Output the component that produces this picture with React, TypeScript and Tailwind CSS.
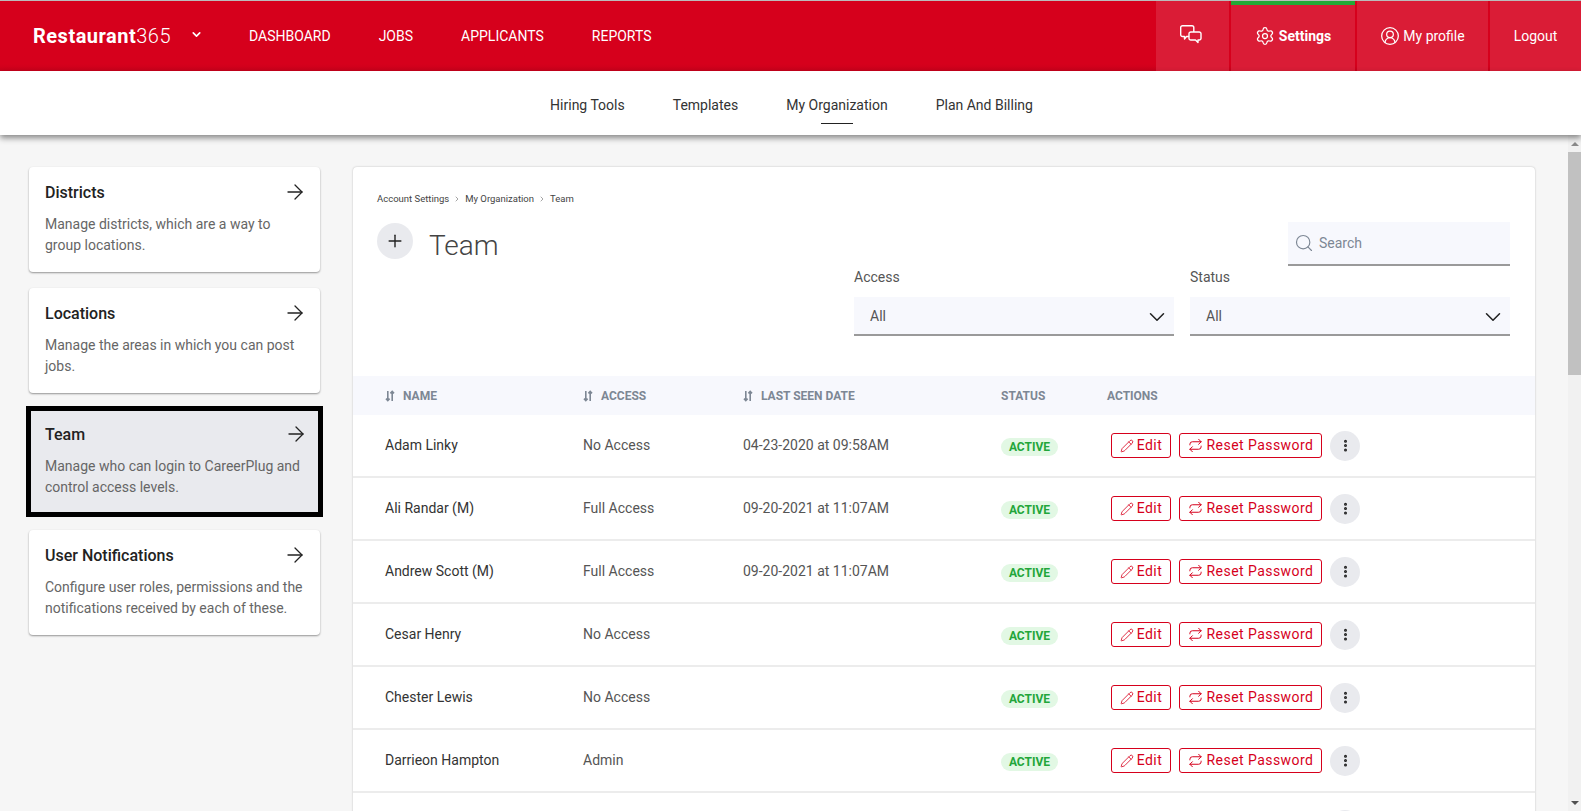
import { ArrowRight, ChevronDown, ChevronRight, EllipsisVertical, Pencil, Plus, Repeat, Search, Settings, CircleUserRound } from "lucide-react";

const nav = ["DASHBOARD", "JOBS", "APPLICANTS", "REPORTS"];
const tabs = ["Hiring Tools", "Templates", "My Organization", "Plan And Billing"];

const cards = [
    { title: "Districts", text: "Manage districts, which are a way to group locations." },
    { title: "Locations", text: "Manage the areas in which you can post jobs." },
    { title: "Team", text: "Manage who can login to CareerPlug and control access levels.", active: true },
    { title: "User Notifications", text: "Configure user roles, permissions and the notifications received by each of these." },
];

const people = [
    { name: "Adam Linky", access: "No Access", seen: "04-23-2020 at 09:58AM" },
    { name: "Ali Randar (M)", access: "Full Access", seen: "09-20-2021 at 11:07AM" },
    { name: "Andrew Scott (M)", access: "Full Access", seen: "09-20-2021 at 11:07AM" },
    { name: "Cesar Henry", access: "No Access", seen: "" },
    { name: "Chester Lewis", access: "No Access", seen: "" },
    { name: "Darrieon Hampton", access: "Admin", seen: "" },
];

function SortIcon() {
    return (
        <svg width="10" height="12" viewBox="0 0 10 12" fill="none" stroke="#7d8794" strokeWidth="1.6">
            <path d="M2.8 1v9.5M1 8.6l1.8 2 1.8-2" />
            <path d="M7.2 11V1.5M5.4 3.4l1.8-2 1.8 2" />
        </svg>
    );
}

function ChatIcon() {
    return (
        <svg className="mb-[4px] mr-[3px]" width="22" height="19" viewBox="0 0 22 19" fill="none" stroke="currentColor" strokeWidth="1.4" strokeLinejoin="round">
            <path d="M9 11.5H6.5L4.5 14v-2.5H2.5a1.8 1.8 0 0 1-1.8-1.8V2.5A1.8 1.8 0 0 1 2.5.7H12a1.8 1.8 0 0 1 1.8 1.8V7" />
            <path d="M10.8 7h8.4A1.8 1.8 0 0 1 21 8.8v4.4a1.8 1.8 0 0 1-1.8 1.8H18v2.6L15.5 15h-4.7A1.8 1.8 0 0 1 9 13.2V8.8A1.8 1.8 0 0 1 10.8 7z" />
        </svg>
    );
}

function Row({ name, access, seen }: { name: string; access: string; seen: string }) {
    return (
        <div className="flex h-[63px] flex-shrink-0 items-center border-b-2 border-[#ececec] text-[14px]">
            <div className="w-[230px] pl-[32px] text-[#333]">{name}</div>
            <div className="w-[160px] text-[#555]">{access}</div>
            <div className="w-[258px] text-[#555]">{seen}</div>
            <div className="w-[110px]">
                <span className="mt-[4px] inline-flex h-[18px] w-[57px] items-center justify-center rounded-full bg-[#e2f8e4] text-[12px] font-bold text-[#22a63a]">
                    ACTIVE
                </span>
            </div>
            <div className="flex items-center">
                <button className="flex h-[25px] w-[60px] items-center justify-center gap-[3px] rounded-[3px] border border-[#d6001c] text-[14px] tracking-[0.4px] text-[#d6001c]">
                    <Pencil className="h-[14px] w-[14px]" strokeWidth={1.4} />
                    Edit
                </button>
                <button className="ml-[8px] flex h-[25px] w-[143px] items-center justify-center gap-[4px] rounded-[3px] border border-[#d6001c] text-[14px] tracking-[0.45px] text-[#d6001c]">
                    <Repeat className="h-[15px] w-[15px]" strokeWidth={1.6} />
                    Reset Password
                </button>
                <button className="ml-[8px] flex h-[30px] w-[30px] items-center justify-center rounded-full bg-[#e9eaee] text-[#222]">
                    <EllipsisVertical className="h-[15px] w-[15px]" strokeWidth={2.8} />
                </button>
            </div>
        </div>
    );
}

function FilterSelect({ label }: { label: string }) {
    return (
        <div className="w-[320px]">
            <div className="h-[20px] text-[14px] leading-[20px] text-[#555]">{label}</div>
            <div className="mt-[10px] flex h-[39px] items-center justify-between border-b-2 border-[#9a9a9a] bg-[#f7f8fd] pl-[16px] pr-[4px] pt-[2px] text-[14px] text-[#555]">
                All
                <ChevronDown className="h-[26px] w-[26px] text-[#222]" strokeWidth={1.4} />
            </div>
        </div>
    );
}

function CardBody({ title, text }: { title: string; text: string }) {
    return (
        <>
            <div className="flex items-center justify-between">
                <span className="text-[16px] font-medium leading-[24px] text-[#222]">{title}</span>
                <ArrowRight className="mt-[-3px] h-[24px] w-[24px] text-[#222]" strokeWidth={1.3} />
            </div>
            <p className="mt-[9px] text-[14px] leading-[21px] text-[#666]">{text}</p>
        </>
    );
}

export default function App() {
    return (
        <div className="flex h-screen flex-col overflow-hidden bg-[#f6f6f6] font-['Roboto',sans-serif]">
            {/* Header */}
            <div className="h-[1px] flex-shrink-0 bg-[#bbb]" />
            <header className="flex h-[70px] flex-shrink-0 items-stretch justify-between bg-gradient-to-b from-[#d6001c] from-90% to-[#c9001b] text-white">
                <div className="flex items-center">
                    <div className="ml-[33px] flex w-[137px] items-baseline text-[20px] tracking-[0.5px]">
                        <span className="font-bold">Restaurant</span>
                        <span className="font-light">365</span>
                    </div>
                    <ChevronDown className="mb-[3px] ml-[20px] h-[13px] w-[13px]" strokeWidth={3} />
                    <nav className="ml-[46px] flex gap-[48px] text-[14px]">
                        {nav.map((item) => (
                            <span key={item}>{item}</span>
                        ))}
                    </nav>
                </div>
                <div className="flex items-stretch gap-[2px] text-[14px]">
                    <div className="flex w-[73px] items-center justify-center bg-[#da1c36]">
                        <ChatIcon />
                    </div>
                    <div className="flex w-[124px] items-center justify-center gap-[4px] border-t-4 border-[#23a936] bg-[#da1c36] pb-[4px] font-bold">
                        <Settings className="h-[20px] w-[20px]" strokeWidth={1.5} />
                        Settings
                    </div>
                    <div className="flex w-[131px] items-center justify-center gap-[3px] bg-[#da1c36]">
                        <CircleUserRound className="h-[20px] w-[20px]" strokeWidth={1.5} />
                        My profile
                    </div>
                    <div className="flex w-[91px] items-center justify-center bg-[#da1c36]">Logout</div>
                </div>
            </header>

            {/* Sub navigation */}
            <div className="relative z-10 flex h-[64px] flex-shrink-0 justify-center gap-[48px] bg-white pl-[2px] text-[14px] text-[#333] shadow-[0_3px_6px_rgba(0,0,0,0.45)]">
                {tabs.map((tab) => (
                    <div key={tab} className="relative flex items-center pt-[4px]">
                        {tab}
                        {tab === "My Organization" && (
                            <div className="absolute bottom-[11px] left-[35px] h-[1px] w-[32px] bg-[#222]" />
                        )}
                    </div>
                ))}
            </div>

            <div className="flex min-h-0 flex-1">
                <div className="flex min-w-0 flex-1 items-start overflow-hidden pl-[26px] pt-[32px]">
                    {/* Left cards */}
                    <div className="flex w-[297px] flex-shrink-0 flex-col">
                        {cards.map((card) =>
                            card.active ? (
                                <div key={card.title} className="mb-[13px] mt-[-3px] h-[111px] border-[5px] border-black bg-[#e9eaee] pl-[14px] pr-[10px] pt-[12px]">
                                    <CardBody title={card.title} text={card.text} />
                                </div>
                            ) : (
                                <div key={card.title} className="mx-[3px] mb-[16px] h-[105px] rounded-[4px] bg-white pl-[16px] pr-[13px] pt-[14px] shadow-[0_1px_2px_rgba(0,0,0,0.4)]">
                                    <CardBody title={card.title} text={card.text} />
                                </div>
                            ),
                        )}
                    </div>

                    {/* Team panel */}
                    <main className="ml-[30px] w-[1182px] flex-shrink-0 rounded-t-[4px] bg-white shadow-[0_0_2px_rgba(0,0,0,0.25)]">
                        <div className="relative h-[209px] px-[24px]">
                            <div className="flex items-center gap-[4px] pt-[26px] text-[9.5px] leading-[12px] text-[#444]">
                                Account Settings
                                <ChevronRight className="h-[8px] w-[8px] text-[#777]" />
                                My Organization
                                <ChevronRight className="h-[8px] w-[8px] text-[#777]" />
                                Team
                            </div>
                            <div className="mt-[18px] flex items-start">
                                <div className="flex h-[36px] w-[36px] items-center justify-center rounded-full bg-[#e9eaee] text-[#222]">
                                    <Plus className="h-[20px] w-[20px]" strokeWidth={1.7} />
                                </div>
                                <h1 className="ml-[16px] mt-[1px] text-[28px] font-light leading-[44px] text-[#444]">Team</h1>
                            </div>
                            <div className="absolute right-[25px] top-[55px] flex h-[44px] w-[222px] items-center gap-[5px] border-b-2 border-[#9a9a9a] bg-[#f7f8fd] pl-[6px] text-[14px] text-[#7d8794]">
                                <Search className="h-[20px] w-[20px]" strokeWidth={1.4} />
                                Search
                            </div>
                            <div className="absolute right-[25px] top-[100px] flex gap-[16px]">
                                <FilterSelect label="Access" />
                                <FilterSelect label="Status" />
                            </div>
                        </div>
                        <div className="flex h-[39px] items-center bg-[#f7f8fd] text-[12px] font-bold text-[#7d8794]">
                            <div className="flex w-[230px] items-center gap-[8px] pl-[32px]"><SortIcon />NAME</div>
                            <div className="flex w-[160px] items-center gap-[8px]"><SortIcon />ACCESS</div>
                            <div className="flex w-[258px] items-center gap-[8px]"><SortIcon />LAST SEEN DATE</div>
                            <div className="w-[106px]">STATUS</div>
                            <div>ACTIONS</div>
                        </div>
                        {people.map((person) => (
                            <Row key={person.name} {...person} />
                        ))}
                        {/* next row is only just in view: the top of its menu button */}
                        <div className="flex h-[63px] items-center pl-[977px]">
                            <div className="h-[30px] w-[30px] rounded-full bg-[#e9eaee]" />
                        </div>
                    </main>
                </div>

                {/* Scrollbar */}
                <div className="flex w-[13px] flex-shrink-0 flex-col bg-[#f1f1f1]">
                    <div className="flex h-[17px] items-center justify-center">
                        <div className="h-0 w-0 border-x-[4px] border-b-[4px] border-x-transparent border-b-[#8a8a8a]" />
                    </div>
                    <div className="h-[223px] bg-[#c1c1c1]" />
                    <div className="flex-1" />
                    <div className="flex h-[17px] items-center justify-center">
                        <div className="h-0 w-0 border-x-[4px] border-t-[4px] border-x-transparent border-t-[#505050]" />
                    </div>
                </div>
            </div>
        </div>
    );
}
